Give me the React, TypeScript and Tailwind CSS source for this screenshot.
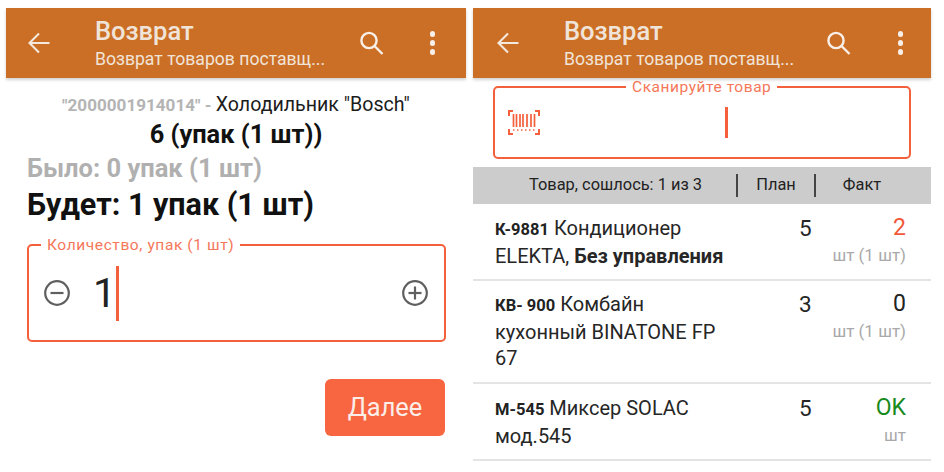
import React from "react";

function Header({ right }: { right?: boolean }) {
  return (
    <div className="relative z-10 flex h-[70px] shrink-0 items-center bg-[#cc6f26] shadow-[0_2px_3px_rgba(0,0,0,0.18)]">
      <div className={`flex shrink-0 ${right ? "w-[91px] pl-[23px]" : "w-[89px] pl-[21px]"}`}>
        <svg width="24" height="24" viewBox="0 0 24 24" fill="none" stroke="#f4e9df" strokeWidth="2.1">
          <path d="M22.5 12H2.5M12 2.5 2.5 12l9.5 9.5" />
        </svg>
      </div>
      <div className="min-w-0 flex-1 text-[#f0e4d9]">
        <div className="text-[25.5px] leading-[30px] font-medium">Возврат</div>
        <div className="mt-[1px] text-[17.6px] leading-[24px]">Возврат товаров поставщ...</div>
      </div>
      <svg className={right ? "mr-[47px]" : "mr-[46px]"} width="26" height="26" viewBox="0 0 26 26" fill="none" stroke="#f8efe8" strokeWidth="2.4">
        <circle cx="11" cy="10.5" r="7.6" />
        <path d="m16.5 16 8 8" />
      </svg>
      <div className={`flex flex-col gap-[3.5px] ${right ? "mr-[28px]" : "mr-[31px]"}`}>
        <span className="h-[5.5px] w-[5.5px] rounded-full bg-[#f8efe8]" />
        <span className="h-[5.5px] w-[5.5px] rounded-full bg-[#f8efe8]" />
        <span className="h-[5.5px] w-[5.5px] rounded-full bg-[#f8efe8]" />
      </div>
    </div>
  );
}

function CircleIcon({ plus }: { plus?: boolean }) {
  return (
    <svg width="28" height="28" viewBox="0 0 28 28" fill="none" stroke="#5f5f5f" strokeWidth="2.2">
      <circle cx="14" cy="14" r="11.8" />
      <path d="M7.5 14h13" />
      {plus && <path d="M14 7.5v13" />}
    </svg>
  );
}

function Barcode() {
  return (
    <svg width="32" height="25" viewBox="0 0 32 25" fill="none" stroke="#f5603c">
      <path strokeWidth="2" d="M5 1H1v5M27 1h4v5M5 24H1v-5M27 24h4v-5" />
      <path strokeWidth="1.7" d="M5.5 4v13M8.5 4v13M12 4v13M15 4v13M19 4v13M23 4v13M26.5 4v13" />
      <path strokeWidth="1.5" d="M5 20h1.5M9 20h1.5M13 20h1.5M17 20h1.5M21 20h1.5M25 20h1.5" />
    </svg>
  );
}

type Row = {
  code: string;
  name: React.ReactNode;
  plan: string;
  fact: string;
  factClass: string;
  unit: string;
  h: string;
};

const rows: Row[] = [
  {
    code: "К-9881",
    name: (
      <>
        {" "}Кондиционер ELEKTA, <b className="font-bold">Без управления</b>
      </>
    ),
    plan: "5",
    fact: "2",
    factClass: "text-[#f2573a]",
    unit: "шт (1 шт)",
    h: "h-[77px] pt-[11px]",
  },
  {
    code: "КВ- 900",
    name: " Комбайн кухонный BINATONE FP 67",
    plan: "3",
    fact: "0",
    factClass: "text-[#222]",
    unit: "шт (1 шт)",
    h: "h-[103px] pt-[10px]",
  },
  {
    code: "М-545",
    name: " Миксер SOLAC мод.545",
    plan: "5",
    fact: "OK",
    factClass: "text-[#198a1c]",
    unit: "шт",
    h: "h-[77px] pt-[11px]",
  },
];

export default function App() {
  return (
    <div className="flex h-[472px] w-[944px] gap-[7px] overflow-hidden bg-white pt-2 pl-[6px] font-['Roboto',sans-serif]">
      {/* Left phone */}
      <div className="flex w-[460px] shrink-0 flex-col">
        <Header />
        <div className="mt-[15px] text-center text-[19.6px] leading-[24px] text-[#1c1c1c]">
          <b className="text-[17.1px] font-bold text-[#b4b4b4]">"2000001914014" - </b>
          Холодильник "Bosch"
        </div>
        <div className="mt-[3px] text-center text-[25.4px] leading-[28px] font-bold text-[#111]">6 (упак (1 шт))</div>
        <div className="mt-[3px] pl-[21px] text-[25.5px] leading-[34px] font-bold text-[#b0b0b0]">Было: 0 упак (1 шт)</div>
        <div className="mt-[2px] pl-[21px] text-[30.5px] leading-[36px] font-bold text-[#111]">Будет: 1 упак (1 шт)</div>
        <div className="relative mt-[21px] ml-[21px] flex h-[98px] w-[419px] items-center rounded-[5px] border-2 border-[#f5603c]">
          <span className="absolute -top-[10px] left-[12px] bg-white px-[6px] text-[15.5px] leading-[18px] tracking-[0.6px] text-[#f5775a]">
            Количество, упак (1 шт)
          </span>
          <div className="ml-[14px] flex">
            <CircleIcon />
          </div>
          <span className="ml-[22px] text-[41px] leading-[48px] text-[#222]">1</span>
          <span className="h-[55px] w-[3px] bg-[#f5603c]" />
          <div className="mr-[15px] ml-auto flex">
            <CircleIcon plus />
          </div>
        </div>
        <div className="mt-[37px] mr-[21px] ml-auto flex h-[57px] w-[120px] items-center justify-center rounded-[6px] bg-[#f76641] text-[25.4px] text-[#fbeee9]">
          Далее
        </div>
      </div>

      {/* Right phone */}
      <div className="flex w-[458px] shrink-0 flex-col">
        <Header right />
        <div className="relative mt-2 ml-5 flex h-[73px] w-[418px] shrink-0 items-center rounded-[5px] border-2 border-[#f5603c]">
          <span className="absolute -top-[10px] left-[131px] bg-white px-[6px] text-[15.5px] leading-[18px] tracking-[0.55px] text-[#f5775a]">
            Сканируйте товар
          </span>
          <div className="ml-[13px] flex">
            <Barcode />
          </div>
          <span className="ml-[185px] h-[31px] w-[3px] bg-[#f5603c]" />
        </div>
        <div className="mt-2 flex h-[37px] shrink-0 items-center bg-[#cccccc] text-[16.4px] text-[#222]">
          <span className="ml-[56px] w-[207px]">Товар, сошлось: 1 из 3</span>
          <span className="h-[23px] w-[2px] bg-[#444]" />
          <span className="w-[76px] text-center">План</span>
          <span className="h-[23px] w-[2px] bg-[#444]" />
          <span className="w-[92px] text-center">Факт</span>
        </div>
        {rows.map((r) => (
          <div key={r.code} className={`flex ${r.h} shrink-0 border-b-2 border-[#e4e4e4]`}>
            <div className="ml-[22px] w-[240px] text-[20px] leading-[26px] text-[#262626]">
              <b className="text-[16.5px] font-bold text-[#222]">{r.code}</b>
              {r.name}
            </div>
            <div className="w-[60px] pl-[64px] text-[22.5px] leading-[26px] text-[#262626]">{r.plan}</div>
            <div className="flex w-[107px] flex-col items-end">
              <span className={`text-[23px] leading-[26px] ${r.factClass}`}>{r.fact}</span>
              <span className="mt-[4px] text-[17px] leading-[20px] text-[#a9a9a9]">{r.unit}</span>
            </div>
          </div>
        ))}
      </div>
    </div>
  );
}
